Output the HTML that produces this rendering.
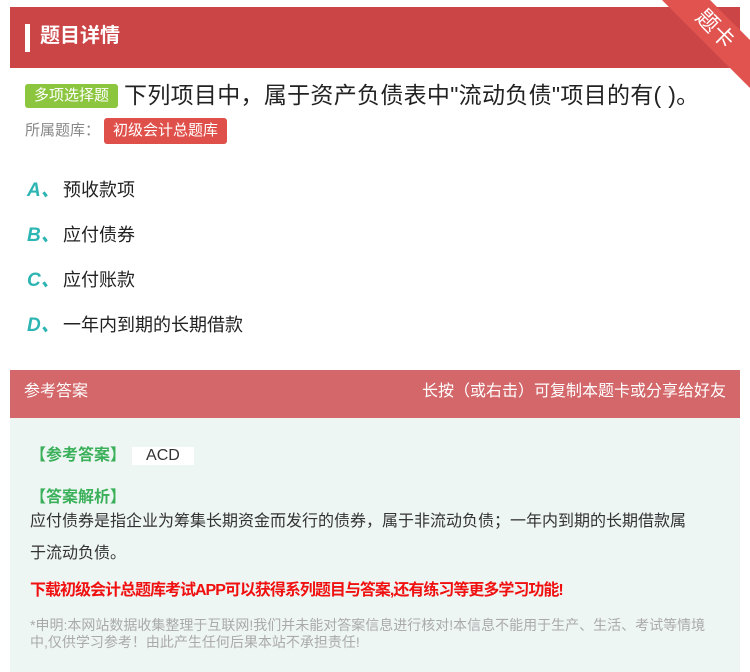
<!DOCTYPE html>
<html><head><meta charset="utf-8"><style>
*{margin:0;padding:0;box-sizing:border-box}
body{width:750px;height:672px;background:#fff;font-family:"Liberation Sans","Noto Sans CJK SC",sans-serif;position:relative;overflow:hidden}
.hdr{position:absolute;left:10px;top:7px;width:730px;height:61px;background:#cb4547}
.hdr .bar{position:absolute;left:15px;top:17px;width:5px;height:28px;background:#fff}
.hdr .t{position:absolute;left:30px;top:14px;color:#fff;font-size:20px;font-weight:bold;line-height:30px}
.rib{position:absolute;right:-40px;top:12px;width:150px;height:34px;background:#e0534f;transform:rotate(45deg);color:#fff;font-size:22px;text-align:center;line-height:34px;transform-origin:center}
.q{position:absolute;left:25px;top:78px;font-size:23px;color:#222;line-height:34px;white-space:nowrap;letter-spacing:0.3px}
.tag{display:inline-block;background:#8cc63f;color:#fff;font-size:15px;padding:0 9px;line-height:24px;border-radius:3px;vertical-align:3px;margin-right:6px;letter-spacing:0}
.lib{position:absolute;left:25px;top:118px;font-size:15px;color:#888;line-height:26px}
.lib span{display:inline-block;background:#e0504a;color:#fff;padding:0 9px;border-radius:3px;margin-left:4px}
.opt{position:absolute;left:27px;font-size:18px;color:#222}
.opt b{display:inline-block;width:36px;color:#2cb5b2;font-style:italic;font-size:19px}
.ans{position:absolute;left:10px;top:370px;width:730px;height:302px;background:#eef6f4}
.ah{height:48px;background:#d3676a;color:#fff;font-size:16px;line-height:44px;padding:0 14px;display:flex;justify-content:space-between}
.g{color:#3bb05a;font-weight:bold;font-size:16px;position:absolute;left:20px}
.txt{position:absolute;left:20px;top:136px;width:665px;font-size:16px;color:#333;line-height:32px}
.red{position:absolute;left:20px;top:206px;color:#f01010;font-weight:bold;font-size:16px;letter-spacing:-1px}
.dec{position:absolute;left:20px;top:247px;width:690px;color:#aaa;font-size:14px;line-height:17px}
</style></head><body>
<div class="hdr"><div class="bar"></div><div class="t">题目详情</div></div>
<div class="rib">题卡</div>
<div class="q"><span class="tag">多项选择题</span>下列项目中，属于资产负债表中"流动负债"项目的有( )。</div>
<div class="lib">所属题库：<span>初级会计总题库</span></div>
<div class="opt" style="top:175px"><b>A、</b>预收款项</div>
<div class="opt" style="top:220px"><b>B、</b>应付债券</div>
<div class="opt" style="top:265px"><b>C、</b>应付账款</div>
<div class="opt" style="top:310px"><b>D、</b>一年内到期的长期借款</div>
<div class="ans">
<div class="ah"><span>参考答案</span><span>长按（或右击）可复制本题卡或分享给好友</span></div>
<div class="g" style="top:71px">【参考答案】<span style="display:inline-block;background:#fff;color:#333;font-weight:normal;padding:0 14px;margin-left:6px">ACD</span></div>
<div class="g" style="top:113px">【答案解析】</div>
<div class="txt">应付债券是指企业为筹集长期资金而发行的债券，属于非流动负债；一年内到期的长期借款属于流动负债。</div>
<div class="red">下载初级会计总题库考试APP可以获得系列题目与答案,还有练习等更多学习功能!</div>
<div class="dec">*申明:本网站数据收集整理于互联网!我们并未能对答案信息进行核对!本信息不能用于生产、生活、考试等情境中,仅供学习参考！由此产生任何后果本站不承担责任!</div>
</div>
</body></html>
